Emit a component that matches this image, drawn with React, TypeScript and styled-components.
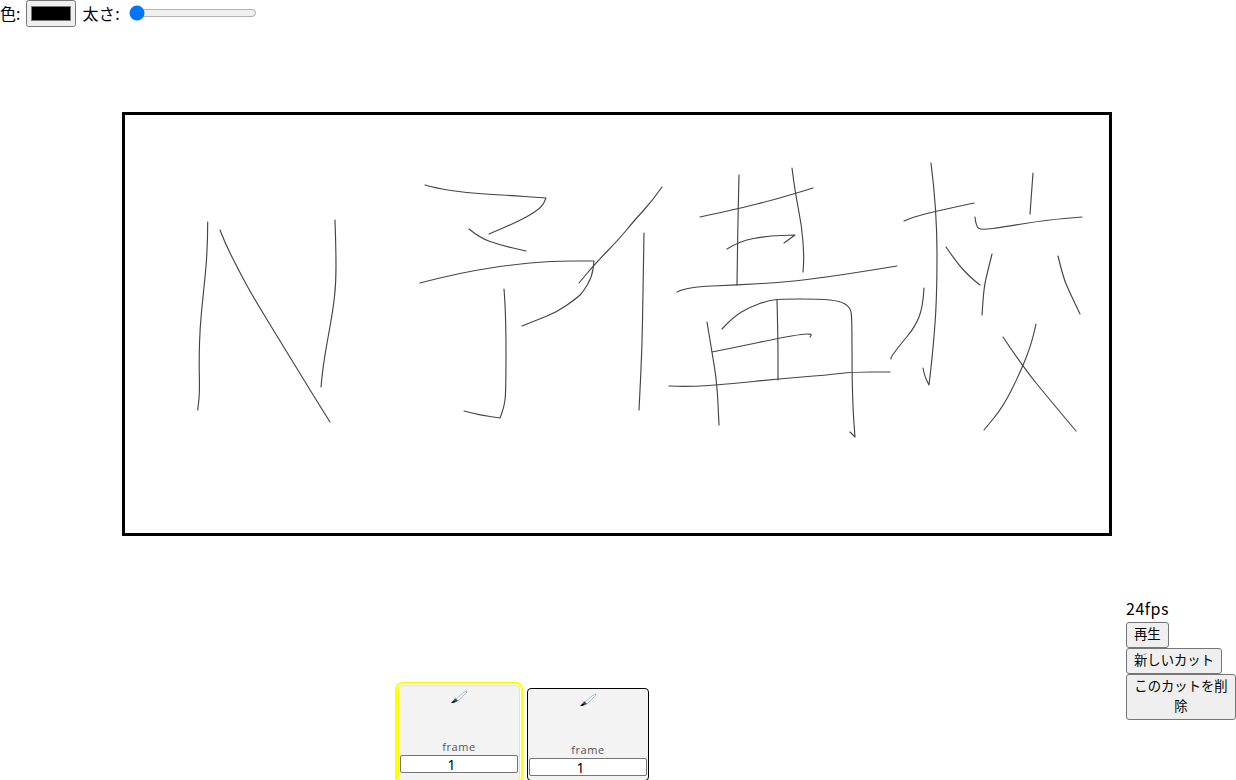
import React from "react";
import styled, { createGlobalStyle } from "styled-components";

const GlobalStyle = createGlobalStyle`
    html, body {
        margin: 0;
        padding: 0;
        height: 100%;
        overflow: hidden;
        background: #fff;
    }
    body {
        font-family: "Noto Sans CJK JP", "Noto Sans", sans-serif;
        font-size: 16px;
        color: #000;
    }
`

const Page = styled.div`
    width: 1236px;
    height: 780px;
    display: flex;
    flex-direction: column;
    overflow: hidden;
`
const Toolbar = styled.div`
    height: 27px;
    display: flex;
    align-items: center;
    font-size: 16px;
    line-height: 27px;
    white-space: nowrap;
`
const Label = styled.label`
    margin-right: 6px;
`
const ThicknessLabel = styled.span`
    letter-spacing: 0.4px;
`
const ColorInput = styled.input`
    width: 50px;
    height: 27px;
    margin: 0 6px 0 0;
    padding: 1px 2px;
    box-sizing: border-box;
`
const RangeInput = styled.input`
    width: 128px;
    margin: 0 0 2px 9px;
`
const Stage = styled.div`
    padding: 85px 0 64px 122px;
`
const Canvas = styled.div`
    width: 990px;
    height: 424px;
    border: 3px solid #000;
    box-sizing: border-box;
    background: #fff;
`
const Drawing = styled.svg`
    display: block;
    width: 984px;
    height: 418px;
`
const Bottom = styled.div`
    flex: 1;
    display: flex;
    min-height: 0;
`
const Strip = styled.div`
    width: 1126px;
    box-sizing: border-box;
    padding-left: 398px;
    display: flex;
    align-items: flex-end;
    gap: 7px;
`
const Thumb = styled.div<{ $active?: boolean }>`
    box-sizing: border-box;
    display: flex;
    flex-direction: column;
    align-items: center;
    background: #f3f3f3;
    border-radius: 4px;
    margin-bottom: -1px;
    width: 122px;
    height: ${props => (props.$active ? "96px" : "93px")};
    padding-bottom: ${props => (props.$active ? "7px" : "4px")};
    border: 1px solid ${props => (props.$active ? "#ffff00" : "#000")};
    outline: ${props => (props.$active ? "2px solid #ffff00" : "none")};
    outline-offset: 1px;
`
const Brush = styled.svg`
    display: block;
    width: 18px;
    height: 14px;
    margin-top: 4px;
`
const FrameLabel = styled.div`
    margin-top: auto;
    margin-bottom: 1px;
    font-family: "Open Sans", "Noto Sans", sans-serif;
    font-size: 11px;
    line-height: 14px;
    letter-spacing: 0.6px;
    color: #555;
`
const FrameInput = styled.input`
    width: 118px;
    height: 18px;
    flex: none;
    box-sizing: border-box;
    margin: 0;
    padding: 0;
    border: 1px solid #767676;
    border-radius: 2px;
    background: #fff;
    text-align: center;
    font-family: "Noto Sans", sans-serif;
    font-size: 14px;
    line-height: 16px;
`
const Side = styled.div`
    width: 110px;
    display: flex;
    flex-direction: column;
    align-items: flex-start;
`
const Fps = styled.div`
    font-size: 16px;
    line-height: 18px;
    margin-top: -1px;
    padding-bottom: 5px;
    letter-spacing: 0.5px;
`
const SideButton = styled.button`
    box-sizing: border-box;
    max-width: 110px;
    padding: 1px 7px 3px;
    border: 1px solid #767676;
    border-radius: 3px;
    background: #efefef;
    color: #000;
    font-family: "Noto Sans CJK JP", sans-serif;
    font-size: 13.33px;
    line-height: 20px;
    text-align: center;
`

const strokes: number[][] = [
    // N
    [207.7, 222, 207.7, 250, 203, 297, 200, 327, 199, 360, 199.7, 393, 197.7, 410],
    [220, 230, 225, 243, 237, 267, 253, 297, 290, 357, 310, 390, 330, 422],
    [335, 220, 336, 250, 336, 283, 333, 310, 327, 343, 323, 367, 321, 387],
    // 予
    [425, 185, 435, 188, 467, 193, 503, 195, 546, 198, 546, 198, 542, 207, 527, 217, 510, 225, 489, 234],
    [469, 229, 480, 238, 500, 245, 526, 251],
    [420, 283, 443, 277, 477, 270, 510, 265, 550, 261, 594, 261, 594, 261, 592, 277, 583, 292, 577, 298, 557, 312, 537, 320, 522, 326],
    [504, 289, 506, 313, 506, 393, 504, 407, 500, 418, 500, 418, 480, 415, 464, 411],
    // 備
    [662, 187, 653, 200, 633, 222, 620, 238, 594, 265, 579, 283],
    [644, 233, 643, 293, 642, 350, 639, 410],
    [700, 217, 737, 209, 777, 199, 813, 188],
    [739, 175, 738, 217, 737, 285],
    [792, 168, 795, 192, 802, 227, 804, 257, 803, 272],
    [727, 249, 740, 241, 767, 236, 795, 235, 795, 235, 784, 243],
    [677, 292, 687, 287, 737, 285, 787, 282, 827, 277, 860, 272, 897, 266],
    [722, 329, 733, 317, 750, 307, 767, 301, 780, 299, 820, 299, 840, 301, 850, 307, 852, 317, 852, 372, 853, 410, 855, 437, 855, 437, 850, 432],
    [777, 300, 778, 337, 778, 380],
    [707, 322, 712, 352, 717, 383, 719, 425],
    [712, 352, 737, 347, 780, 338, 803, 334, 812, 334, 810, 337],
    [669, 386, 687, 387, 730, 384, 777, 379, 827, 375, 853, 372, 890, 372],
    // 校
    [931, 163, 937, 210, 937, 297, 933, 350, 929, 385, 929, 385, 925, 377, 923, 368],
    [904, 221, 913, 217, 937, 211, 974, 203],
    [924, 288, 923, 307, 915, 327, 900, 345, 891, 357, 891, 359],
    [946, 247, 957, 263, 970, 277, 980, 285],
    [992, 254, 988, 270, 984, 287, 982, 315],
    [1058, 256, 1063, 277, 1070, 293, 1080, 314],
    [1033, 173, 1030, 214],
    [975, 217, 976, 227, 982, 230, 1003, 227, 1047, 220, 1082, 217],
    [1003, 337, 1023, 367, 1050, 400, 1076, 431],
    [1036, 324, 1032, 343, 1020, 373, 1003, 407, 984, 430],
]

// round off the pen points the way a canvas quadratic sketch does
const toPath = (s: number[]) => {
    let d = `M${s[0]} ${s[1]}`
    for (let i = 2; i < s.length - 2; i += 2) {
        const mx = (s[i] + s[i + 2]) / 2
        const my = (s[i + 1] + s[i + 3]) / 2
        d += ` Q${s[i]} ${s[i + 1]} ${mx} ${my}`
    }
    return d + ` L${s[s.length - 2]} ${s[s.length - 1]}`
}

const BrushIcon = () => (
    <Brush viewBox="0 0 18 14">
        <path d="M6 9 L13 3 Q16 1 17 1 Q17 3 14 5 L8 11 Z" fill="#fff" stroke="#9aa9b8" strokeWidth="0.8" />
        <path d="M5 8 L8 11 L6 12 L4 10 Z" fill="#1d4f80" />
        <path d="M4 10 L6 12 L3 13 L1 13 Z" fill="#000" />
    </Brush>
)

const Frame = ({ active }: { active?: boolean }) => (
    <Thumb $active={active}>
        <BrushIcon />
        <FrameLabel>frame</FrameLabel>
        <FrameInput type="number" defaultValue="1" />
    </Thumb>
)

export default function App() {
    return (
        <Page>
            <GlobalStyle />
            <Toolbar>
                <Label>色:</Label>
                <ColorInput type="color" defaultValue="#000000" />
                <ThicknessLabel>太さ:</ThicknessLabel>
                <RangeInput type="range" min={1} max={50} defaultValue={1} />
            </Toolbar>
            <Stage>
                <Canvas>
                    <Drawing viewBox="125 115 984 418">
                        {strokes.map((s, i) => (
                            <path key={i} d={toPath(s)} fill="none" stroke="#444" strokeWidth="1.15" strokeLinejoin="round" strokeLinecap="round" />
                        ))}
                    </Drawing>
                </Canvas>
            </Stage>
            <Bottom>
                <Strip>
                    <Frame active />
                    <Frame />
                </Strip>
                <Side>
                    <Fps>24fps</Fps>
                    <SideButton>再生</SideButton>
                    <SideButton>新しいカット</SideButton>
                    <SideButton>このカットを削除</SideButton>
                </Side>
            </Bottom>
        </Page>
    )
}
